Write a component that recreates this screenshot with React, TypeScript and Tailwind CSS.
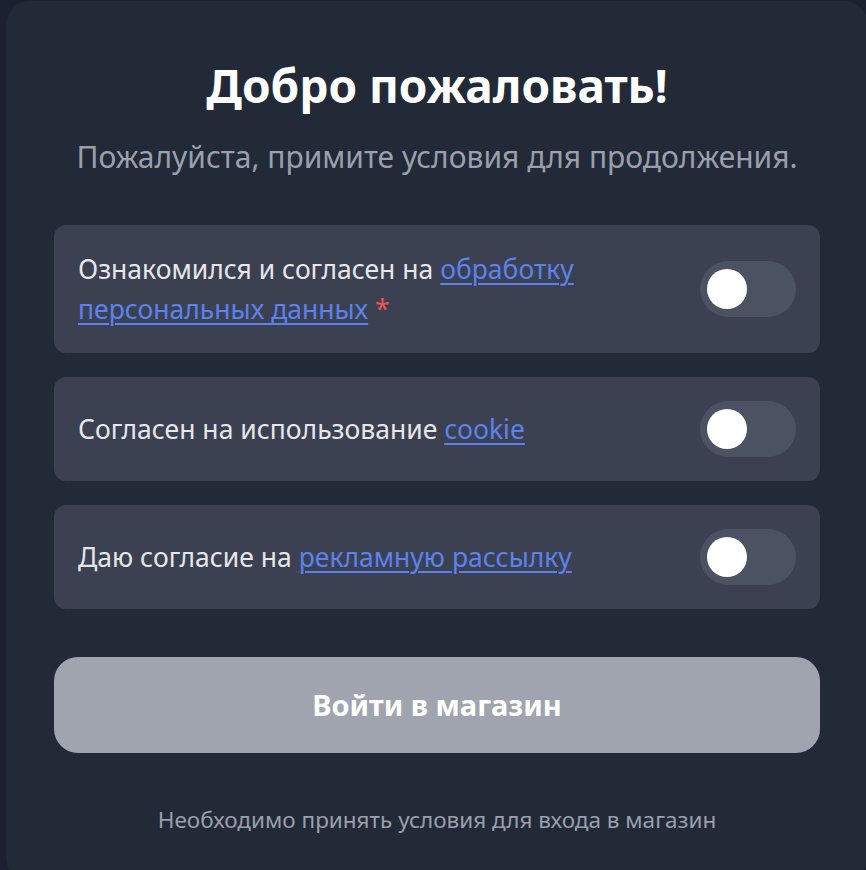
import React, { useState } from "react";

function Toggle({ on, onClick }: { on: boolean; onClick: () => void }) {
  return (
    <button
      onClick={onClick}
      className={`relative shrink-0 w-[96px] h-[56px] rounded-full ${on ? "bg-[#5b82ef]" : "bg-[#4b5262]"}`}
    >
      <span
        className={`absolute top-[8px] w-[40px] h-[40px] rounded-full bg-white ${on ? "left-[48px]" : "left-[7px]"}`}
      />
    </button>
  );
}

export default function App() {
  const [t, setT] = useState([false, false, false]);
  const flip = (i: number) => setT((p) => p.map((v, j) => (j === i ? !v : v)));
  const link = "text-[#5b82ef] underline underline-offset-[4px] decoration-[1.5px]";
  return (
    <div
      className="min-h-[870px] w-[866px] overflow-hidden bg-[#1b2130] pt-[1px]"
      style={{ fontFamily: '"Noto Sans", "Open Sans", sans-serif' }}
    >
      <div className="ml-[6px] w-[862px] h-[880px] rounded-[24px] bg-[#222937] px-[48px] pt-[52px]">
        <h1 className="text-center text-[46px] font-bold text-white leading-[64px] whitespace-nowrap">
          Добро пожаловать!
        </h1>
        <p className="mt-[20px] text-center text-[30px] text-[#99a0ac] leading-[40px] whitespace-nowrap">
          Пожалуйста, примите условия для продолжения.
        </p>
        <div className="mt-[48px] flex flex-col gap-[24px]">
          <div className="flex items-center justify-between gap-4 rounded-[12px] bg-[#3b4151] p-[24px]">
            <p className="text-[26.5px] leading-[40px] text-[#e5e7eb] max-w-[600px]">
              Ознакомился и согласен на <a className={link}>обработку персональных данных</a>{" "}
              <span className="text-[#ef5350]">*</span>
            </p>
            <Toggle on={t[0]} onClick={() => flip(0)} />
          </div>
          <div className="flex items-center justify-between gap-4 rounded-[12px] bg-[#3b4151] p-[24px]">
            <p className="text-[26.5px] leading-[40px] text-[#e5e7eb]">
              Согласен на использование <a className={link}>cookie</a>
            </p>
            <Toggle on={t[1]} onClick={() => flip(1)} />
          </div>
          <div className="flex items-center justify-between gap-4 rounded-[12px] bg-[#3b4151] p-[24px]">
            <p className="text-[26.5px] leading-[40px] text-[#e5e7eb]">
              Даю согласие на <a className={link}>рекламную рассылку</a>
            </p>
            <Toggle on={t[2]} onClick={() => flip(2)} />
          </div>
        </div>
        <button className="mt-[48px] w-full h-[96px] rounded-[24px] bg-[#a0a4ae] text-[29px] font-bold text-white">
          Войти в магазин
        </button>
        <p className="mt-[50px] text-center text-[22.5px] leading-[34px] text-[#99a0ac]">
          Необходимо принять условия для входа в магазин
        </p>
      </div>
    </div>
  );
}
